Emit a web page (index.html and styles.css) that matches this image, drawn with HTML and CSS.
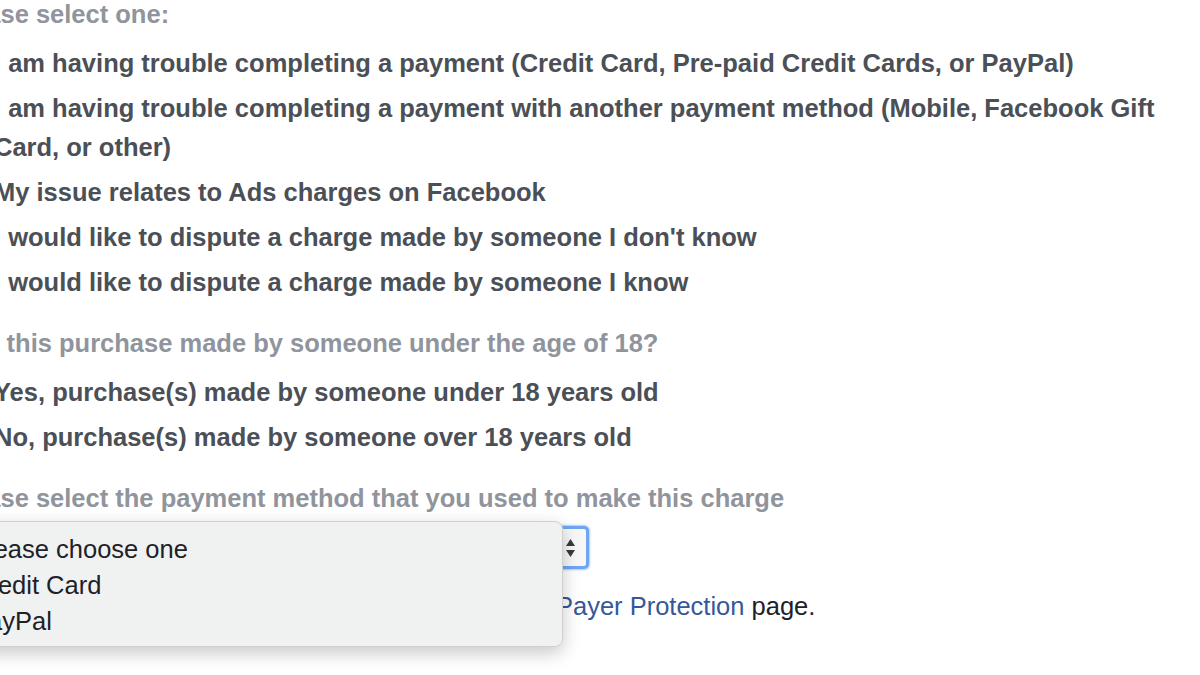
FILE: index.html
```html
<!DOCTYPE html>
<html>
<head>
    <title>Payment Issue</title>
    <link rel="stylesheet" href="styles.css">
</head>
<body>
    <div class="page">
        <div class="form">
            <div class="section">
                <div class="question">Please select one:</div>
                <label class="option"><input type="radio" name="issue"><span>I am having trouble completing a payment (Credit Card, Pre-paid Credit Cards, or PayPal)</span></label>
                <label class="option"><input type="radio" name="issue"><span>I am having trouble completing a payment with another payment method (Mobile, Facebook Gift Card, or other)</span></label>
                <label class="option"><input type="radio" name="issue"><span>My issue relates to Ads charges on Facebook</span></label>
                <label class="option"><input type="radio" name="issue"><span>I would like to dispute a charge made by someone I don't know</span></label>
                <label class="option"><input type="radio" name="issue"><span>I would like to dispute a charge made by someone I know</span></label>
            </div>
            <div class="section">
                <div class="question">Was this purchase made by someone under the age of 18?</div>
                <label class="option"><input type="radio" name="age"><span>Yes, purchase(s) made by someone under 18 years old</span></label>
                <label class="option"><input type="radio" name="age"><span>No, purchase(s) made by someone over 18 years old</span></label>
            </div>
            <div class="section">
                <div class="question">Please select the payment method that you used to make this charge</div>
                <div class="select-wrap">
                    <div class="select">
                        <span class="select-value">Please choose one</span>
                        <svg class="stepper" width="11" height="20" viewBox="0 0 11 20">
                            <path d="M5.5 1 L10 8 H1 Z" fill="#3a3a3a"/>
                            <path d="M5.5 19 L10 12 H1 Z" fill="#3a3a3a"/>
                        </svg>
                    </div>
                    <ul class="menu">
                        <li>Please choose one</li>
                        <li>Credit Card</li>
                        <li>PayPal</li>
                    </ul>
                </div>
                <p class="note">For more info about your PayPal purchases, visit our <a href="#">Payer Protection</a> page.</p>
            </div>
        </div>
    </div>
</body>
</html>
```

FILE: styles.css
```css
body {
    margin: 0;
    padding: 0;
    background-color: #fff;
    font-family: "Liberation Sans", Arial, sans-serif;
    font-size: 25.5px;
}
.page {
    width: 1200px;
    height: 675px;
    overflow: hidden;
}
.form {
    margin: -5px 0 0 -52px;
    width: 1250px;
}
.section {
    margin-bottom: 22px;
}
.question {
    font-weight: bold;
    color: #90949c;
    line-height: 39px;
    margin-bottom: 10px;
}
.option {
    display: flex;
    align-items: flex-start;
    font-weight: bold;
    color: #4b4f56;
    line-height: 39px;
    margin-bottom: 6px;
}
.option input {
    margin: 12px 0 0 0;
    width: 16px;
    height: 16px;
    flex: none;
}
.option span {
    padding-left: 30px;
}
.section:nth-child(3) .question {
    margin-bottom: 8px;
}
.select-wrap {
    position: relative;
    width: 641px;
}
.select {
    display: flex;
    align-items: center;
    justify-content: space-between;
    box-sizing: border-box;
    height: 43px;
    border: 3px solid #6ea6f2;
    border-radius: 5px;
    background-color: #f7f7f7;
    box-shadow: 0 0 2px 1px rgba(110, 166, 242, 0.6);
    padding: 0 10px 0 20px;
    color: #1d2129;
}
.stepper {
    display: block;
}
.menu {
    position: absolute;
    top: -5px;
    left: 0;
    width: 615px;
    height: 126px;
    box-sizing: border-box;
    margin: 0;
    padding: 9px 0 0 22px;
    list-style: none;
    background-color: #f0f1f1;
    border: 1px solid #d0d0d0;
    border-radius: 8px;
    box-shadow: 0 6px 18px rgba(0, 0, 0, 0.22);
    color: #1d2129;
}
.menu li {
    line-height: 36px;
}
.note {
    margin: 18px 0 0 7px;
    line-height: 39px;
    color: #1d2129;
}
.note a {
    color: #365899;
    text-decoration: none;
}
```
